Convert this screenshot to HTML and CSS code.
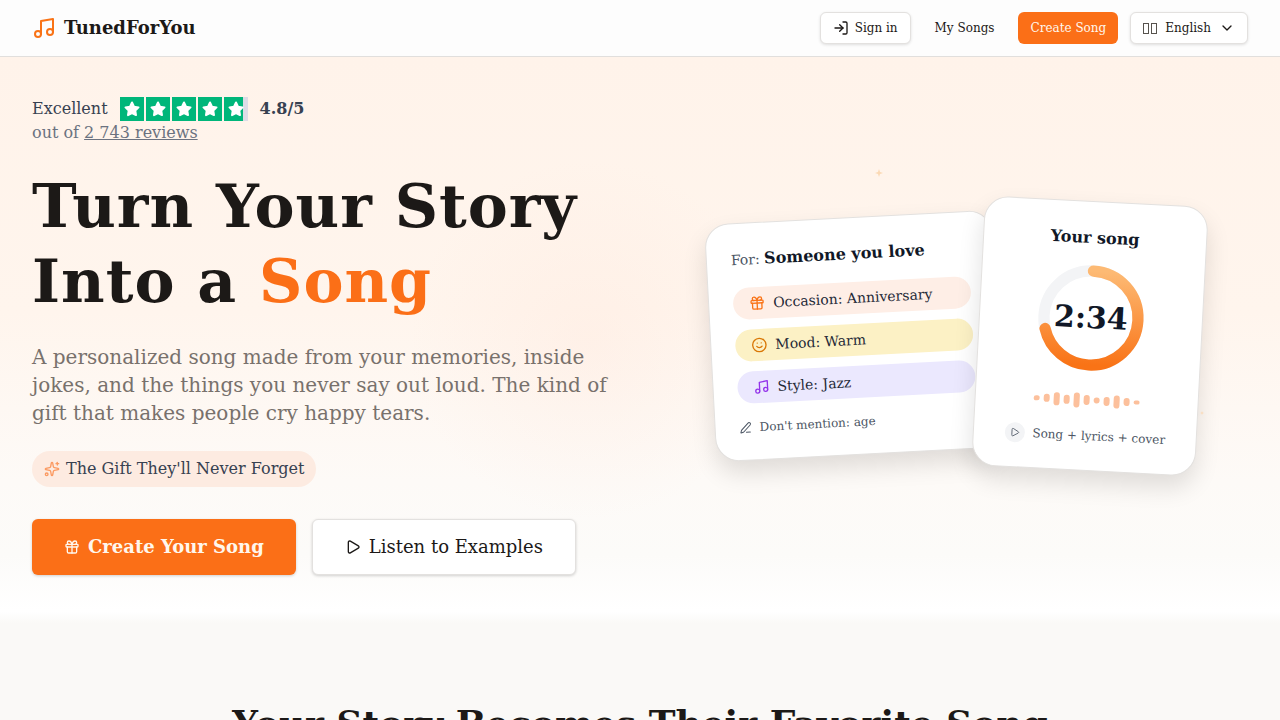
FILE: index.html
```html
<!DOCTYPE html>
<html lang="en">
<head>
    <meta charset="UTF-8">
    <meta name="viewport" content="width=device-width, initial-scale=1.0">
    <title>TunedForYou - Turn Your Story Into a Song</title>
    <link rel="stylesheet" href="styles.css">
</head>
<body>
    <!-- Shared icons -->
    <svg class="sprite" aria-hidden="true">
        <symbol id="icon-music" viewBox="0 0 24 24">
            <path d="M9 18V5l12-2v13"/><circle cx="6" cy="18" r="3"/><circle cx="18" cy="16" r="3"/>
        </symbol>
        <symbol id="icon-gift" viewBox="0 0 24 24">
            <rect x="3" y="8" width="18" height="4" rx="1"/><path d="M12 8v13"/><path d="M19 12v7a2 2 0 0 1-2 2H7a2 2 0 0 1-2-2v-7"/><path d="M7.500 8a2.500 2.500 0 0 1 0-5A4.800 8 0 0 1 12 8a4.800 8 0 0 1 4.500-5 2.500 2.500 0 0 1 0 5"/>
        </symbol>
        <symbol id="icon-play" viewBox="0 0 24 24">
            <path d="M5 5a2 2 0 0 1 3.008-1.728l11.997 6.998a2 2 0 0 1 .003 3.458l-12 7A2 2 0 0 1 5 19z"/>
        </symbol>
        <symbol id="icon-star" viewBox="0 0 24 24">
            <path d="M12 5.500L14 9.700L18.500 10.400L15.300 13.600L16 18.100L12 16L8 18.100L8.700 13.600L5.500 10.400L10 9.700Z"/>
        </symbol>
        <symbol id="icon-spark" viewBox="0 0 24 24">
            <path d="M12 0l3 9 9 3-9 3-3 9-3-9-9-3 9-3z"/>
        </symbol>
    </svg>

    <header class="header">
        <a class="logo" href="#">
            <svg class="icon icon-lg"><use href="#icon-music"/></svg>
            <span>TunedForYou</span>
        </a>
        <nav class="nav">
            <a class="nav-btn outline" href="#">
                <svg class="icon" viewBox="0 0 24 24"><path d="m10 17 5-5-5-5"/><path d="M15 12H3"/><path d="M15 3h4a2 2 0 0 1 2 2v14a2 2 0 0 1-2 2h-4"/></svg>
                Sign in
            </a>
            <a class="nav-btn" href="#">My Songs</a>
            <a class="nav-btn primary" href="#">Create Song</a>
            <button class="nav-btn outline language" type="button">
                <span class="flag"><i></i><i></i></span>
                <span>English</span>
                <svg class="icon" viewBox="0 0 24 24"><path d="m6 9 6 6 6-6"/></svg>
            </button>
        </nav>
    </header>

    <main>
        <section class="hero">
            <div class="hero-text">
                <div class="rating">
                    <div class="rating-row">
                        <span>Excellent</span>
                        <span class="stars" role="img" aria-label="4.8 out of 5 stars">
                            <svg class="star"><use href="#icon-star"/></svg>
                            <svg class="star"><use href="#icon-star"/></svg>
                            <svg class="star"><use href="#icon-star"/></svg>
                            <svg class="star"><use href="#icon-star"/></svg>
                            <svg class="star partial"><use href="#icon-star"/></svg>
                        </span>
                        <strong>4.8/5</strong>
                    </div>
                    <div class="rating-count">out of <a href="#">2 743 reviews</a></div>
                </div>

                <h1>Turn Your Story Into a <span class="accent">Song</span></h1>
                <p class="lead">A personalized song made from your memories, inside jokes, and the things you never say out loud. The kind of gift that makes people cry happy tears.</p>

                <div class="tagline">
                    <svg class="icon" viewBox="0 0 24 24"><path d="M11.017 2.814a1 1 0 0 1 1.966 0l1.051 5.558a2 2 0 0 0 1.594 1.594l5.558 1.051a1 1 0 0 1 0 1.966l-5.558 1.051a2 2 0 0 0-1.594 1.594l-1.051 5.558a1 1 0 0 1-1.966 0l-1.051-5.558a2 2 0 0 0-1.594-1.594l-5.558-1.051a1 1 0 0 1 0-1.966l5.558-1.051a2 2 0 0 0 1.594-1.594z"/><path d="M20 2v4"/><path d="M22 4h-4"/><circle cx="4" cy="20" r="2"/></svg>
                    <span>The Gift They'll Never Forget</span>
                </div>

                <div class="actions">
                    <a class="btn btn-primary" href="#"><svg class="icon"><use href="#icon-gift"/></svg>Create Your Song</a>
                    <a class="btn btn-outline" href="#"><svg class="icon"><use href="#icon-play"/></svg>Listen to Examples</a>
                </div>
            </div>

            <div class="hero-cards">
                <div class="card brief">
                    <div class="brief-for">For: <strong>Someone you love</strong></div>
                    <ul class="tags">
                        <li class="tag occasion"><svg class="icon"><use href="#icon-gift"/></svg>Occasion: Anniversary</li>
                        <li class="tag mood"><svg class="icon" viewBox="0 0 24 24"><circle cx="12" cy="12" r="10"/><path d="M8 14s1.500 2 4 2 4-2 4-2"/><path d="M9 9h.01"/><path d="M15 9h.01"/></svg>Mood: Warm</li>
                        <li class="tag style"><svg class="icon"><use href="#icon-music"/></svg>Style: Jazz</li>
                    </ul>
                    <div class="brief-note">
                        <svg class="icon icon-sm" viewBox="0 0 24 24"><path d="M13 21h8"/><path d="M21.174 6.812a1 1 0 0 0-3.986-3.987L3.842 16.174a2 2 0 0 0-.5.830l-1.321 4.352a.5.5 0 0 0 .623.622l4.353-1.320a2 2 0 0 0 .830-.497z"/></svg>
                        Don't mention: age
                    </div>
                </div>

                <div class="card player">
                    <strong class="player-title">Your song</strong>
                    <div class="ring">
                        <svg viewBox="0 0 100 100">
                            <defs>
                                <linearGradient id="ringGradient" x1="1" y1="0" x2="0" y2="0">
                                    <stop offset="0" stop-color="#fdba74"/>
                                    <stop offset="1" stop-color="#f97316"/>
                                </linearGradient>
                            </defs>
                            <circle class="ring-track" cx="50" cy="50" r="42"/>
                            <circle class="ring-value" cx="50" cy="50" r="42" transform="rotate(-90 50 50)"/>
                        </svg>
                        <span class="ring-time">2:34</span>
                    </div>
                    <div class="wave">
                        <i style="height: 5px"></i>
                        <i style="height: 8px"></i>
                        <i style="height: 13px"></i>
                        <i style="height: 9px"></i>
                        <i style="height: 15px"></i>
                        <i style="height: 10px"></i>
                        <i style="height: 6px"></i>
                        <i style="height: 9px"></i>
                        <i style="height: 13px"></i>
                        <i style="height: 8px"></i>
                        <i style="height: 4px"></i>
                    </div>
                    <div class="player-note">
                        <span class="play-dot"><svg class="icon"><use href="#icon-play"/></svg></span>
                        Song + lyrics + cover
                    </div>
                </div>

                <svg class="spark spark-top"><use href="#icon-spark"/></svg>
                <svg class="spark spark-side"><use href="#icon-spark"/></svg>
            </div>
        </section>

        <section class="story">
            <h2>Your Story Becomes Their Favorite Song</h2>
        </section>
    </main>
</body>
</html>
```
FILE: styles.css
```css
* {
    box-sizing: border-box;
}
body {
    margin: 0;
    font-family: 'DejaVu Serif', serif;
    font-size: 16px;
    line-height: 24px;
    color: #1c1917;
    background-color: #faf9f7;
    overflow-x: hidden;
}
h1, h2, p, ul {
    margin: 0;
    padding: 0;
}
a {
    color: inherit;
    text-decoration: none;
}
.sprite {
    display: none;
}
.icon {
    width: 16px;
    height: 16px;
    flex-shrink: 0;
    fill: none;
    stroke: currentColor;
    stroke-width: 2;
    stroke-linecap: round;
    stroke-linejoin: round;
}
.icon-lg {
    width: 24px;
    height: 24px;
}
.icon-sm {
    width: 12px;
    height: 12px;
}

/* Header */
.header {
    display: flex;
    align-items: center;
    justify-content: space-between;
    padding: 12px 32px;
    background-color: #fdfdfd;
    border-bottom: 1px solid #e1dfdd;
}
.logo {
    display: flex;
    align-items: center;
    gap: 8px;
    font-size: 18px;
    font-weight: bold;
}
.logo .icon {
    color: #f97316;
}
.nav {
    display: flex;
    gap: 12px;
}
.nav-btn {
    display: flex;
    align-items: center;
    gap: 6px;
    height: 32px;
    padding: 0 12px;
    border: 0;
    border-radius: 6px;
    font-family: inherit;
    font-size: 12px;
    line-height: 16px;
    color: #1c1917;
    background: none;
}
.nav-btn.outline {
    border: 1px solid #e3e1df;
    background-color: #fff;
    box-shadow: 0 1px 3px rgba(0, 0, 0, 0.12);
}
.nav-btn.primary {
    color: #fff7ed;
    background-color: #fb6f17;
}
.nav-btn.language {
    gap: 8px;
}
.flag {
    display: flex;
    gap: 2px;
}
.flag i {
    width: 6px;
    height: 11px;
    border: 1px solid #57534e;
}

/* Hero */
.hero {
    display: grid;
    grid-template-columns: 1fr 1fr;
    align-items: center;
    gap: 48px;
    padding: 40px 32px 48px;
    background:
        radial-gradient(circle at 46% 50%, rgba(255, 228, 215, 0.3), transparent 24%),
        linear-gradient(#fff3ea, #fff5ed 45%, #fef8f3 62%, #fdfaf7 75%, #fcfbf9 88%, #fff 98%, #faf9f7);
}
.rating-row {
    display: flex;
    align-items: center;
    gap: 12px;
    color: #374151;
}
.stars {
    display: flex;
    gap: 2px;
}
.star {
    width: 24px;
    height: 24px;
    fill: #fff;
    stroke: #fff;
    stroke-width: 2;
    stroke-linejoin: round;
    background-color: #00b67a;
}
.star.partial {
    background: linear-gradient(90deg, #00b67a 80%, #dcdce6 80%);
}
.rating-count {
    color: #6b7280;
}
.rating-count a {
    text-decoration: underline;
}
h1 {
    margin-top: 24px;
    font-size: 60px;
    line-height: 75px;
    letter-spacing: 1px;
}
.accent {
    color: #fb6f17;
}
.lead {
    margin-top: 24px;
    font-size: 20px;
    line-height: 28px;
    color: #78716c;
}
.tagline {
    display: inline-flex;
    align-items: center;
    gap: 6px;
    margin-top: 24px;
    padding: 6px 12px;
    border-radius: 18px;
    color: #374151;
    background-color: #fdebe1;
}
.tagline .icon {
    color: #fb9a62;
}
.actions {
    display: flex;
    gap: 16px;
    margin-top: 32px;
}
.btn {
    display: flex;
    align-items: center;
    gap: 8px;
    height: 56px;
    padding: 0 32px;
    border-radius: 6px;
    font-size: 18px;
    line-height: 28px;
    box-shadow: 0 1px 3px rgba(0, 0, 0, 0.18);
}
.btn-primary {
    font-weight: bold;
    color: #fff7ed;
    background-color: #fb6f17;
}
.btn-outline {
    border: 1px solid #e3e1df;
    background-color: #fff;
}

/* Hero cards */
.hero-cards {
    position: relative;
    display: flex;
    align-items: center;
    justify-content: center;
}
.card {
    flex-shrink: 0;
    padding: 24px;
    border: 1px solid #e3e1df;
    border-radius: 24px;
    background-color: #fff;
    box-shadow: 0 12px 24px rgba(0, 0, 0, 0.12);
}
.brief {
    width: 288px;
    transform: rotate(-3deg);
}
.brief-for {
    font-size: 14px;
    color: #4b5563;
}
.brief-for strong {
    font-size: 16px;
    color: #111827;
}
.tags {
    display: flex;
    flex-direction: column;
    gap: 10px;
    margin: 16px 0;
    list-style: none;
}
.tag {
    display: flex;
    align-items: center;
    gap: 8px;
    height: 32px;
    padding: 0 16px;
    border-radius: 16px;
    font-size: 14px;
    color: #1f2937;
}
.tag.occasion {
    background-color: #feeee6;
}
.tag.occasion .icon {
    color: #f97316;
}
.tag.mood {
    background-color: #fcf1c5;
}
.tag.mood .icon {
    color: #d97706;
}
.tag.style {
    background-color: #ebe8fe;
}
.tag.style .icon {
    color: #9333ea;
}
.brief-note {
    display: flex;
    align-items: center;
    gap: 8px;
    font-size: 12px;
    line-height: 16px;
    color: #4b5563;
}
.player {
    display: flex;
    flex-direction: column;
    align-items: center;
    width: 224px;
    margin-left: -20px;
    transform: rotate(3deg);
}
.player-title {
    color: #111827;
}
.ring {
    display: grid;
    place-items: center;
    width: 112px;
    height: 112px;
    margin: 12px 0 16px;
}
.ring > * {
    grid-area: 1 / 1;
}
.ring circle {
    fill: none;
    stroke-width: 10;
}
.ring-track {
    stroke: #f3f4f6;
}
.ring .ring-value {
    stroke: url(#ringGradient);
    stroke-linecap: round;
    stroke-dasharray: 186 264;
}
.ring-time {
    font-size: 30px;
    font-weight: bold;
    line-height: 36px;
    color: #111827;
}
.wave {
    display: flex;
    align-items: center;
    gap: 4px;
    height: 20px;
    margin-bottom: 16px;
}
.wave i {
    width: 6px;
    border-radius: 3px;
    background-color: #fcc09c;
}
.player-note {
    display: flex;
    align-items: center;
    gap: 8px;
    font-size: 12px;
    line-height: 20px;
    color: #4b5563;
    white-space: nowrap;
}
.play-dot {
    display: grid;
    place-items: center;
    width: 20px;
    height: 20px;
    border-radius: 50%;
    background-color: #f3f4f6;
}
.play-dot .icon {
    width: 10px;
    height: 10px;
}
.spark {
    position: absolute;
    fill: #fbd9b4;
}
.spark-top {
    top: -32px;
    left: 211px;
    width: 8px;
    height: 8px;
}
.spark-side {
    right: 44px;
    bottom: 56px;
    width: 4px;
    height: 4px;
}

/* Story */
.story {
    padding: 80px 32px;
    text-align: center;
}
h2 {
    font-size: 36px;
    line-height: 40px;
}
```
